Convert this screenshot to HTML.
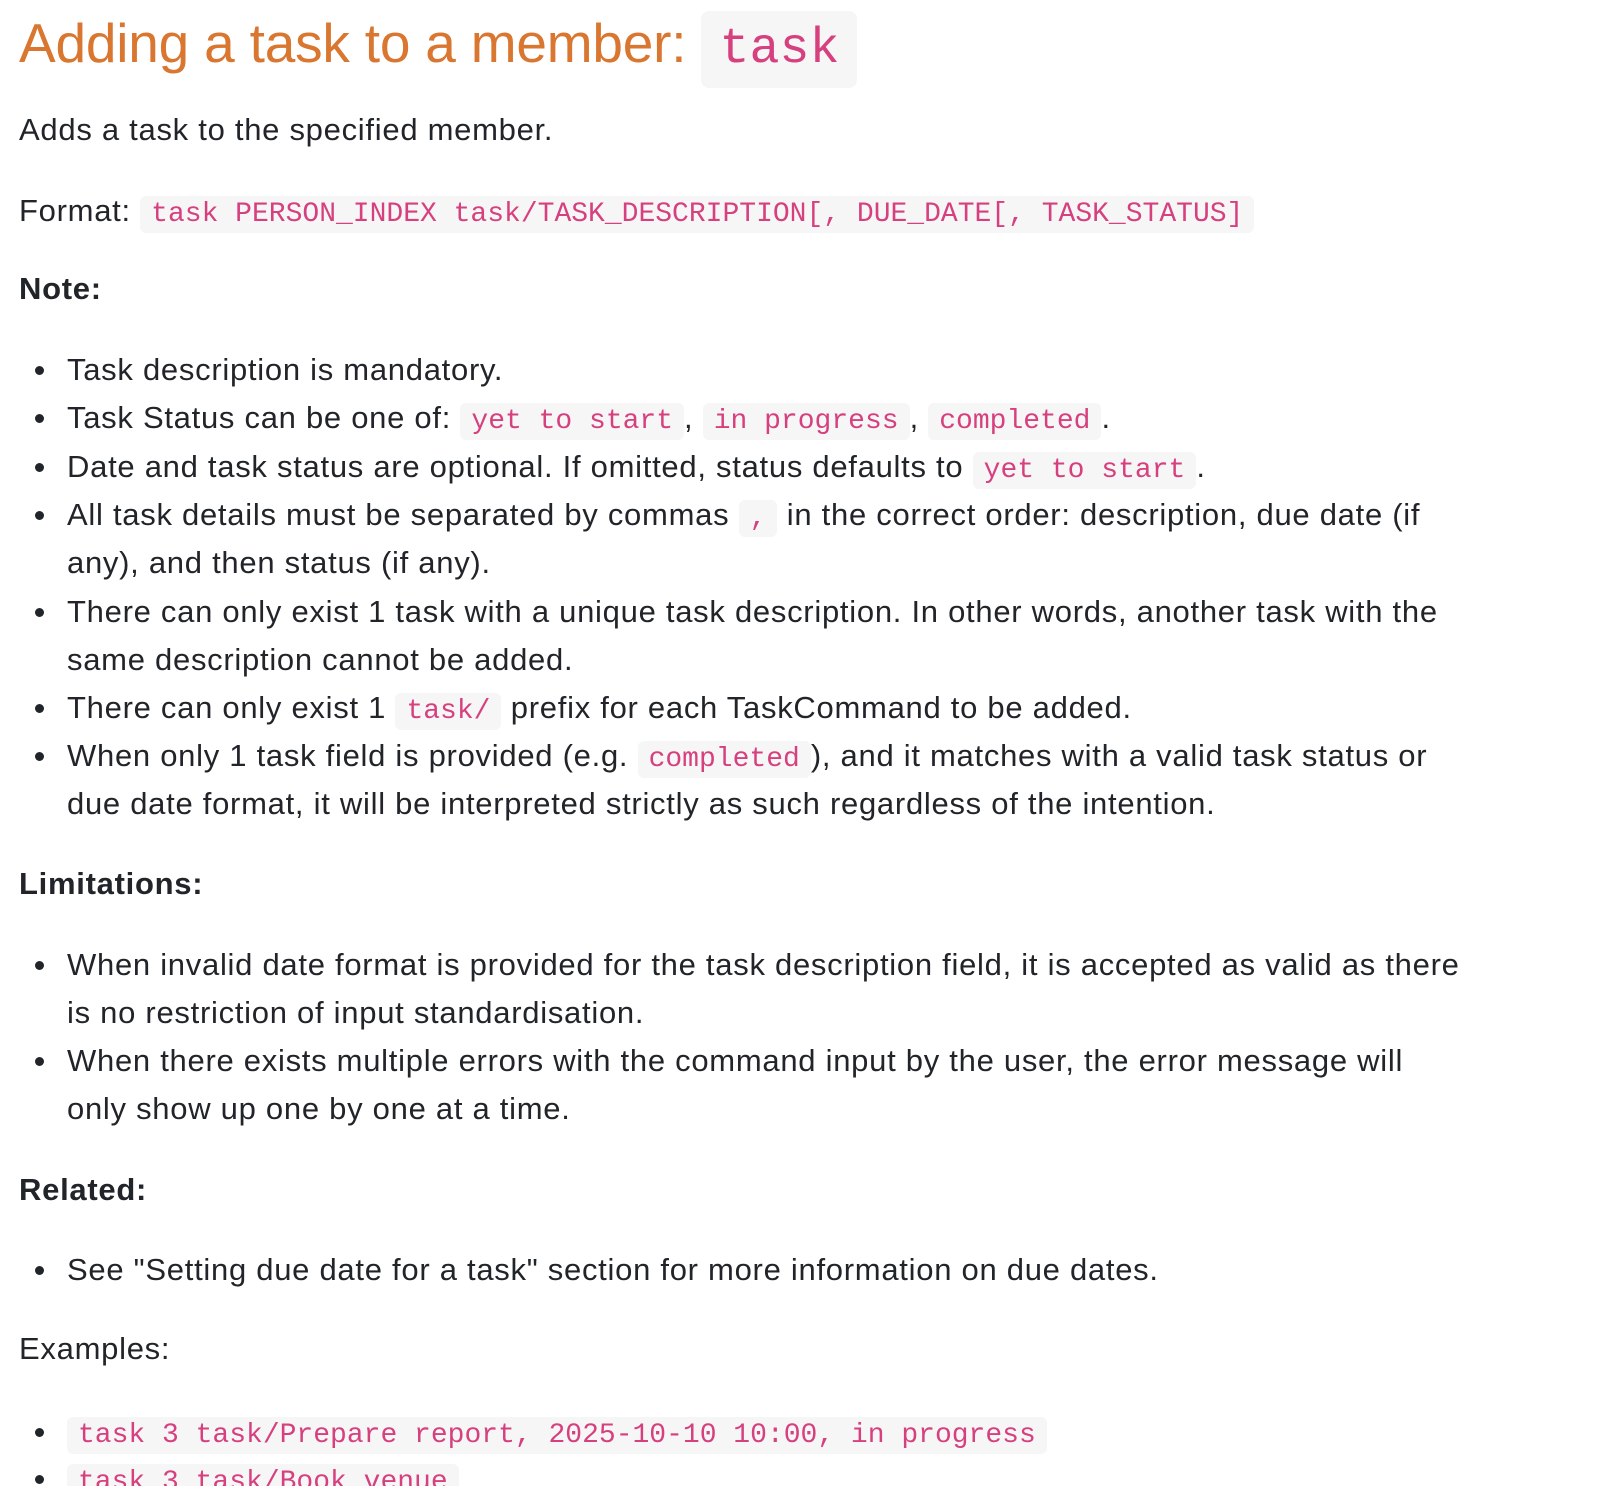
<!DOCTYPE html>
<html><head><meta charset="utf-8"><style>
html,body{margin:0;padding:0;background:#fff;width:1612px;height:1486px;overflow:hidden}
body{font-family:"Liberation Sans",Helvetica,Arial,sans-serif;color:#212529;font-size:31px;letter-spacing:0.72px;position:relative}
.l{position:absolute;left:67px;height:48px;line-height:48px;white-space:nowrap}
.p{left:19px}
.b::before{content:"";position:absolute;left:-32px;top:20px;width:9px;height:9px;border-radius:50%;background:#212529}
code{font-family:"Liberation Mono","DejaVu Sans Mono",monospace;font-size:28px;letter-spacing:0;color:#d6407f;background:#f6f6f6;border-radius:6px;padding:3px 11px}
b{font-weight:bold}
h1{position:absolute;left:19px;top:0;margin:0;height:86px;line-height:86px;font-size:55px;font-weight:normal;color:#d97630;white-space:nowrap;letter-spacing:-0.2px}
h1 code{font-size:50px;padding:10px 18px;border-radius:8px;letter-spacing:0}
</style></head><body>
<h1>Adding a task to a member: <code>task</code></h1>
<div class="l p" style="top:106px">Adds a task to the specified member.</div>
<div class="l p" style="top:187px">Format: <code>task PERSON_INDEX task/TASK_DESCRIPTION[, DUE_DATE[, TASK_STATUS]</code></div>
<div class="l p" style="top:265px"><b>Note:</b></div>
<div class="l b" style="top:346px">Task description is mandatory.</div>
<div class="l b" style="top:394px">Task Status can be one of: <code>yet to start</code>, <code>in progress</code>, <code>completed</code>.</div>
<div class="l b" style="top:443px">Date and task status are optional. If omitted, status defaults to <code>yet to start</code>.</div>
<div class="l b" style="top:491px">All task details must be separated by commas <code>,</code> in the correct order: description, due date (if</div>
<div class="l" style="top:539px">any), and then status (if any).</div>
<div class="l b" style="top:588px">There can only exist 1 task with a unique task description. In other words, another task with the</div>
<div class="l" style="top:636px">same description cannot be added.</div>
<div class="l b" style="top:684px">There can only exist 1 <code>task/</code> prefix for each TaskCommand to be added.</div>
<div class="l b" style="top:732px">When only 1 task field is provided (e.g. <code>completed</code>), and it matches with a valid task status or</div>
<div class="l" style="top:780px">due date format, it will be interpreted strictly as such regardless of the intention.</div>
<div class="l p" style="top:860px"><b>Limitations:</b></div>
<div class="l b" style="top:941px">When invalid date format is provided for the task description field, it is accepted as valid as there</div>
<div class="l" style="top:989px">is no restriction of input standardisation.</div>
<div class="l b" style="top:1037px">When there exists multiple errors with the command input by the user, the error message will</div>
<div class="l" style="top:1085px">only show up one by one at a time.</div>
<div class="l p" style="top:1166px"><b>Related:</b></div>
<div class="l b" style="top:1246px">See "Setting due date for a task" section for more information on due dates.</div>
<div class="l p" style="top:1325px">Examples:</div>
<div class="l b" style="top:1408px"><code>task 3 task/Prepare report, 2025-10-10 10:00, in progress</code></div>
<div class="l b" style="top:1455px"><code>task 3 task/Book venue</code></div>
</body></html>
